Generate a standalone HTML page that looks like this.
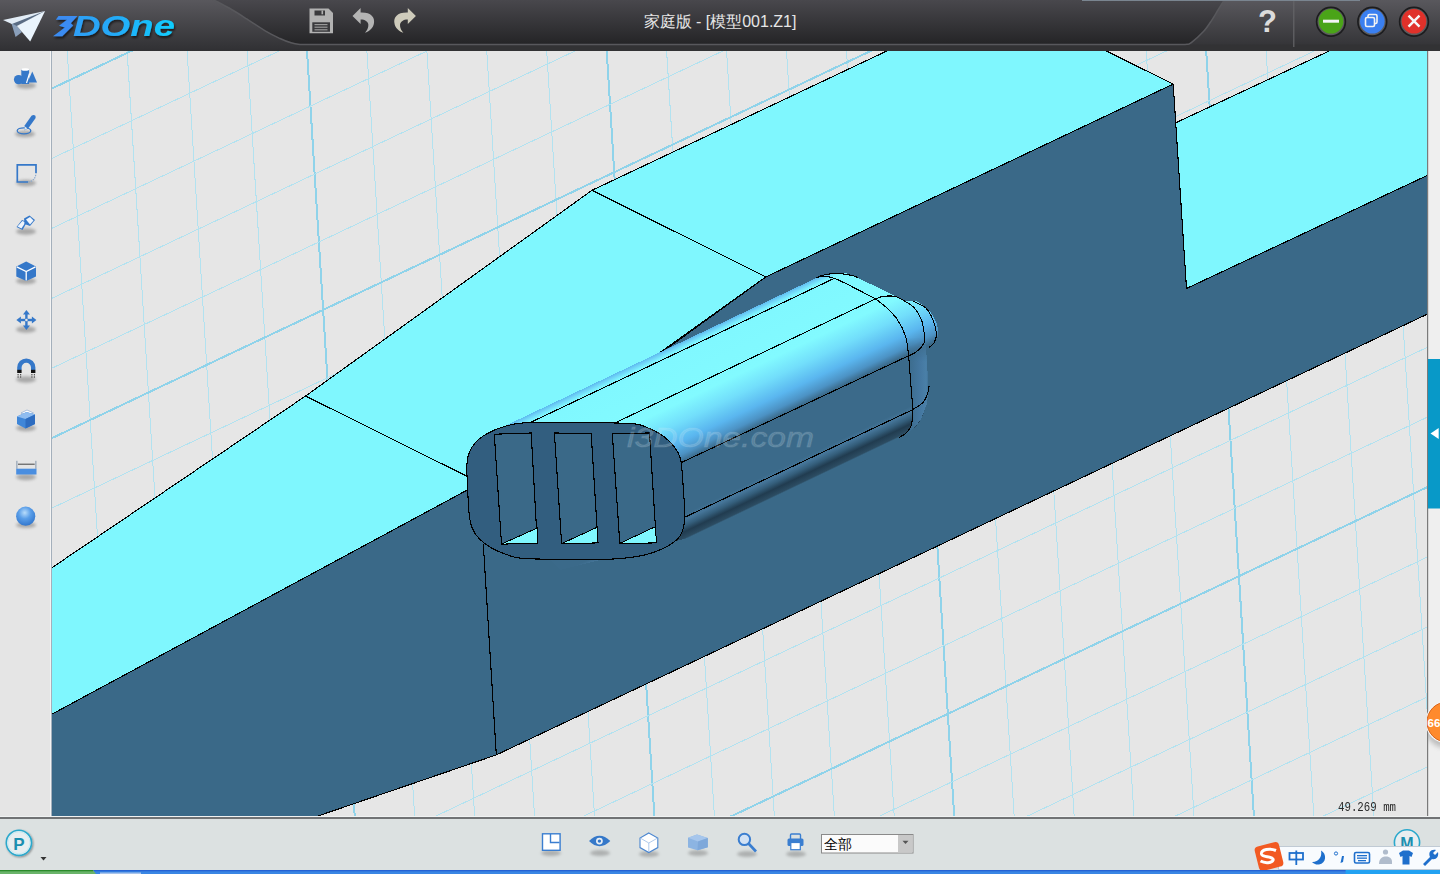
<!DOCTYPE html>
<html><head><meta charset="utf-8">
<style>
html,body{margin:0;padding:0;width:1440px;height:874px;overflow:hidden;background:#e6e6e6;font-family:"Liberation Sans",sans-serif;position:relative;}
svg{display:block;}
</style></head><body>
<svg width="1440" height="874" viewBox="0 0 1440 874" style="position:absolute;left:0;top:0">
<defs><clipPath id="vc"><rect x="51.5" y="51" width="1376" height="765"/></clipPath></defs>
<rect x="51.5" y="51" width="1376" height="765" fill="#e6e6e6"/>
<g clip-path="url(#vc)" shape-rendering="crispEdges">
<g shape-rendering="crispEdges"><line x1="-52.7" y1="51" x2="-5.0" y2="816" stroke="#b2e2f0" stroke-width="1"/>
<line x1="7.2" y1="51" x2="55.0" y2="816" stroke="#8fd3ea" stroke-width="2"/>
<line x1="67.2" y1="51" x2="114.9" y2="816" stroke="#b2e2f0" stroke-width="1"/>
<line x1="127.1" y1="51" x2="174.9" y2="816" stroke="#b2e2f0" stroke-width="1"/>
<line x1="187.1" y1="51" x2="234.8" y2="816" stroke="#b2e2f0" stroke-width="1"/>
<line x1="247.0" y1="51" x2="294.7" y2="816" stroke="#b2e2f0" stroke-width="1"/>
<line x1="307.0" y1="51" x2="354.7" y2="816" stroke="#8fd3ea" stroke-width="2"/>
<line x1="366.9" y1="51" x2="414.6" y2="816" stroke="#b2e2f0" stroke-width="1"/>
<line x1="426.9" y1="51" x2="474.6" y2="816" stroke="#b2e2f0" stroke-width="1"/>
<line x1="486.8" y1="51" x2="534.5" y2="816" stroke="#b2e2f0" stroke-width="1"/>
<line x1="546.7" y1="51" x2="594.5" y2="816" stroke="#b2e2f0" stroke-width="1"/>
<line x1="606.7" y1="51" x2="654.4" y2="816" stroke="#8fd3ea" stroke-width="2"/>
<line x1="666.6" y1="51" x2="714.4" y2="816" stroke="#b2e2f0" stroke-width="1"/>
<line x1="726.6" y1="51" x2="774.3" y2="816" stroke="#b2e2f0" stroke-width="1"/>
<line x1="786.5" y1="51" x2="834.3" y2="816" stroke="#b2e2f0" stroke-width="1"/>
<line x1="846.5" y1="51" x2="894.2" y2="816" stroke="#b2e2f0" stroke-width="1"/>
<line x1="906.4" y1="51" x2="954.2" y2="816" stroke="#8fd3ea" stroke-width="2"/>
<line x1="966.4" y1="51" x2="1014.1" y2="816" stroke="#b2e2f0" stroke-width="1"/>
<line x1="1026.3" y1="51" x2="1074.1" y2="816" stroke="#b2e2f0" stroke-width="1"/>
<line x1="1086.3" y1="51" x2="1134.0" y2="816" stroke="#b2e2f0" stroke-width="1"/>
<line x1="1146.2" y1="51" x2="1194.0" y2="816" stroke="#b2e2f0" stroke-width="1"/>
<line x1="1206.2" y1="51" x2="1253.9" y2="816" stroke="#8fd3ea" stroke-width="2"/>
<line x1="1266.1" y1="51" x2="1313.8" y2="816" stroke="#b2e2f0" stroke-width="1"/>
<line x1="1326.1" y1="51" x2="1373.8" y2="816" stroke="#b2e2f0" stroke-width="1"/>
<line x1="1386.0" y1="51" x2="1433.7" y2="816" stroke="#b2e2f0" stroke-width="1"/>
<line x1="1446.0" y1="51" x2="1493.7" y2="816" stroke="#b2e2f0" stroke-width="1"/>
<line x1="1505.9" y1="51" x2="1553.6" y2="816" stroke="#8fd3ea" stroke-width="2"/>
<line x1="51.5" y1="18.7" x2="1427.5" y2="-631.9" stroke="#b2e2f0" stroke-width="1"/>
<line x1="51.5" y1="88.7" x2="1427.5" y2="-561.9" stroke="#8fd3ea" stroke-width="2"/>
<line x1="51.5" y1="158.6" x2="1427.5" y2="-492.0" stroke="#b2e2f0" stroke-width="1"/>
<line x1="51.5" y1="228.5" x2="1427.5" y2="-422.1" stroke="#b2e2f0" stroke-width="1"/>
<line x1="51.5" y1="298.5" x2="1427.5" y2="-352.1" stroke="#b2e2f0" stroke-width="1"/>
<line x1="51.5" y1="368.4" x2="1427.5" y2="-282.2" stroke="#b2e2f0" stroke-width="1"/>
<line x1="51.5" y1="438.3" x2="1427.5" y2="-212.3" stroke="#8fd3ea" stroke-width="2"/>
<line x1="51.5" y1="508.3" x2="1427.5" y2="-142.3" stroke="#b2e2f0" stroke-width="1"/>
<line x1="51.5" y1="578.2" x2="1427.5" y2="-72.4" stroke="#b2e2f0" stroke-width="1"/>
<line x1="51.5" y1="648.1" x2="1427.5" y2="-2.5" stroke="#b2e2f0" stroke-width="1"/>
<line x1="51.5" y1="718.1" x2="1427.5" y2="67.5" stroke="#b2e2f0" stroke-width="1"/>
<line x1="51.5" y1="788.0" x2="1427.5" y2="137.4" stroke="#8fd3ea" stroke-width="2"/>
<line x1="51.5" y1="857.9" x2="1427.5" y2="207.3" stroke="#b2e2f0" stroke-width="1"/>
<line x1="51.5" y1="927.9" x2="1427.5" y2="277.2" stroke="#b2e2f0" stroke-width="1"/>
<line x1="51.5" y1="997.8" x2="1427.5" y2="347.2" stroke="#b2e2f0" stroke-width="1"/>
<line x1="51.5" y1="1067.7" x2="1427.5" y2="417.1" stroke="#b2e2f0" stroke-width="1"/>
<line x1="51.5" y1="1137.7" x2="1427.5" y2="487.0" stroke="#8fd3ea" stroke-width="2"/>
<line x1="51.5" y1="1207.6" x2="1427.5" y2="557.0" stroke="#b2e2f0" stroke-width="1"/>
<line x1="51.5" y1="1277.5" x2="1427.5" y2="626.9" stroke="#b2e2f0" stroke-width="1"/>
<line x1="51.5" y1="1347.5" x2="1427.5" y2="696.8" stroke="#b2e2f0" stroke-width="1"/>
<line x1="51.5" y1="1417.4" x2="1427.5" y2="766.8" stroke="#b2e2f0" stroke-width="1"/>
<line x1="51.5" y1="1487.3" x2="1427.5" y2="836.7" stroke="#8fd3ea" stroke-width="2"/></g>

<polygon points="51.5,568 305.6,396 592,190.3 886.8,51 1106.3,51 1173.2,84.1 765.9,276.9 467.3,490 51.5,714.4" fill="#7ff7fe"/>
<polygon points="1175.7,122.8 1329.2,51 1428,51 1428,175.1 1186.5,288.5" fill="#7ff7fe"/>
<polygon points="51.5,714.4 467.3,490 765.9,276.9 1173.2,84.1 1186.5,288.5 1428,175.1 1428,313.8 496.3,754.9 318,816 51.5,816" fill="#3a6988"/>
<g stroke="#000" stroke-width="1.1" fill="none">
<polyline points="51.5,568 305.6,396 592,190.3 886.8,51"/>
<polyline points="1106.3,51 1173.2,84.1 1186.5,288.5 1428,175.1"/>
<polyline points="1175.7,122.8 1329.2,51"/>
<polyline points="51.5,714.4 467.3,490 765.9,276.9 1173.2,84.1"/>
<polyline points="318,816 496.3,754.9 1428,313.8"/>
<line x1="305.6" y1="396" x2="467" y2="476.3"/>
<line x1="592" y1="190.3" x2="765.9" y2="276.9"/>
<line x1="483.3" y1="544" x2="496.3" y2="754.9"/>
</g>


<defs>
<linearGradient id="hg" gradientUnits="userSpaceOnUse" x1="505.6" y1="425.6" x2="583" y2="588.1">
<stop offset="0" stop-color="#5cb8ee"/>
<stop offset="0.012" stop-color="#6ccef6"/>
<stop offset="0.035" stop-color="#7ef4fe"/>
<stop offset="0.06" stop-color="#80f8ff"/>
<stop offset="0.3" stop-color="#82faff"/>
<stop offset="0.4" stop-color="#72defb"/>
<stop offset="0.5" stop-color="#5ab6ef"/>
<stop offset="0.565" stop-color="#4c92c4"/>
<stop offset="0.605" stop-color="#3b6a8a"/>
<stop offset="0.87" stop-color="#3b6a8a"/>
<stop offset="0.90" stop-color="#46769a"/>
<stop offset="0.93" stop-color="#345e7b"/>
<stop offset="0.96" stop-color="#213c50"/>
<stop offset="0.992" stop-color="#2c4c62"/>
<stop offset="1" stop-color="#3a6988"/>
</linearGradient>
</defs>
<path d="M505.6,425.6 L822.9,274.9  C825.4,274.6 833.0,272.9 837.8,273.0 C842.6,273.1 842.5,271.6 851.5,275.2 C860.5,278.8 882.9,290.2 891.5,294.3 C900.1,298.4 900.3,298.4 903.0,299.5 C905.7,300.6 905.5,300.8 907.6,301.0 C909.7,301.2 912.6,299.9 915.6,301.0 C918.6,302.1 922.9,304.8 925.9,307.5 C928.9,310.2 931.9,313.7 933.9,317.2 C935.9,320.7 937.3,325.2 937.9,328.6 C938.5,332.0 938.3,334.8 937.3,337.8 C936.2,340.8 933.5,344.4 931.6,346.5 C929.8,348.6 926.9,347.4 926.2,350.5 C925.5,353.6 926.9,360.3 927.2,365.0 C927.5,369.7 927.7,374.2 927.9,378.5 C928.1,382.8 928.5,386.7 928.4,390.8 C928.2,394.9 928.2,398.4 927.0,403.2 C925.8,408.0 923.3,415.3 920.9,419.7 C918.5,424.1 916.0,426.1 912.6,429.3 C909.2,432.5 905.3,436.0 900.3,439.0 C895.3,442.0 885.4,445.8 882.4,447.1 L700,535 L560,570 L470,480 Z" fill="url(#hg)"/>
<defs><linearGradient id="capg" gradientUnits="userSpaceOnUse" x1="906" y1="0" x2="929" y2="0">
<stop offset="0" stop-color="#3a6988"/><stop offset="0.6" stop-color="#4477a0"/><stop offset="0.88" stop-color="#4a80a8"/><stop offset="1" stop-color="#3a6c90"/></linearGradient>
<linearGradient id="capm" gradientUnits="userSpaceOnUse" x1="0" y1="338" x2="0" y2="362">
<stop offset="0" stop-color="#fff" stop-opacity="0"/><stop offset="1" stop-color="#fff" stop-opacity="1"/></linearGradient>
<mask id="capk" maskUnits="userSpaceOnUse" x="880" y="300" width="60" height="150"><rect x="880" y="300" width="60" height="150" fill="url(#capm)"/></mask></defs>
<path d="M905.3,335.5 L908.1,351.5 L910.5,380 L912.6,408.7 L911.3,425.2 L905.8,433.4 L898.9,437.5 L900.3,439 L912.6,429.3 L920.9,419.7 L927,403.2 L928.4,390.8 L927.9,378.5 L927.2,365 L926.2,350.5 L924.5,338 Z" fill="url(#capg)" mask="url(#capk)"/>
<g stroke="#000" stroke-width="1.1" fill="none">
<line x1="529.9" y1="422.7" x2="834.3" y2="278.3"/>
<line x1="615.4" y1="422.7" x2="875.5" y2="298.9"/>
<line x1="682.1" y1="462.2" x2="908.5" y2="355.8"/>
<line x1="685" y1="517.1" x2="912" y2="410"/>
<path d="M668,347.8 L765.9,276.9"/>
<path d="M816.0,277.2 C819.0,277.4 824.4,274.7 834.3,278.3 C844.2,281.9 868.6,295.5 875.5,298.9"/>
<path d="M816.0,277.6 C817.7,277.1 822.3,275.2 826.0,274.5 C829.7,273.8 833.8,273.4 838.0,273.5 C842.2,273.6 848.2,274.7 851.5,275.4 C854.8,276.1 856.9,277.1 858.0,277.5"/>
<path d="M875.5,298.9 C876.8,298.5 880.2,296.8 883.5,296.4 C886.8,296.0 891.8,295.8 895.0,296.4 C898.2,297.0 901.7,299.4 903.0,300.0"/>
<path d="M875.5,298.9 C877.4,300.4 883.4,304.6 887.0,308.0 C890.6,311.4 894.2,314.9 897.3,319.5 C900.3,324.1 903.5,330.2 905.3,335.5 C907.1,340.8 907.2,344.1 908.1,351.5 C909.0,358.9 909.8,370.5 910.5,380.0 C911.2,389.5 912.5,401.2 912.6,408.7 C912.7,416.2 912.4,421.1 911.3,425.2 C910.2,429.3 907.9,431.3 905.8,433.4 C903.7,435.4 900.0,436.8 898.9,437.5"/>
<path d="M903.0,300.0 C904.9,301.3 911.4,304.8 914.4,308.0 C917.4,311.2 919.7,315.3 921.3,319.5 C922.9,323.7 923.7,329.4 924.2,333.2 C924.7,337.0 925.5,339.3 924.2,342.4 C923.0,345.4 919.3,349.3 916.7,351.5 C914.1,353.7 909.9,355.1 908.5,355.8"/>
<path d="M908.0,412.0 C908.7,411.7 909.4,411.7 912.0,410.0 C914.6,408.3 920.9,405.0 923.6,401.8 C926.3,398.6 927.5,393.4 928.4,390.8 C929.3,388.2 928.9,386.8 929.0,386.0"/>
<path d="M913.0,301.2 C915.1,302.3 922.6,304.9 925.9,308.0 C929.2,311.1 931.2,315.7 933.0,320.0 C934.8,324.3 936.3,330.2 936.5,334.0 C936.7,337.8 935.2,340.8 934.0,343.0 C932.8,345.2 929.8,346.8 929.0,347.5"/>
</g>
<path d="M525.2,422.7 C538.1,422.0 562.3,422.5 580.0,422.6 C597.7,422.8 620.0,422.7 631.5,423.6 C643.0,424.5 643.6,426.2 648.7,428.2 C653.9,430.2 658.2,432.6 662.4,435.5 C666.5,438.4 670.6,442.1 673.6,445.9 C676.6,449.7 678.8,452.2 680.4,458.5 C682.0,464.8 682.3,474.3 683.0,483.7 C683.7,493.1 684.7,507.6 684.7,515.0 C684.8,522.4 684.4,524.4 683.3,528.3 C682.2,532.2 681.1,535.3 677.9,538.6 C674.7,541.9 669.5,545.3 664.1,548.0 C658.7,550.7 652.1,553.2 645.2,554.9 C638.3,556.6 629.4,557.6 622.9,558.3 C616.4,559.0 613.1,559.1 606.0,559.3 C598.9,559.5 593.5,559.4 580.0,559.3 C566.5,559.2 537.5,559.4 525.2,558.6 C512.9,557.8 512.1,556.3 506.4,554.5 C500.7,552.7 495.4,550.2 490.9,547.6 C486.4,545.0 482.6,542.1 479.5,539.0 C476.4,535.9 474.2,532.6 472.5,528.8 C470.8,525.0 470.2,522.4 469.4,516.0 C468.6,509.6 468.1,498.8 467.7,490.5 C467.3,482.2 466.7,472.5 466.8,466.5 C466.9,460.5 467.2,458.4 468.5,454.5 C469.8,450.6 471.8,446.7 474.7,443.3 C477.6,439.9 481.1,437.0 485.8,434.3 C490.5,431.6 496.3,428.9 502.9,427.0 C509.5,425.1 512.4,423.4 525.2,422.7 Z" fill="#325e7f" stroke="#000" stroke-width="1.1"/>
<g fill="#3a6988" stroke="#000" stroke-width="1.1">
<polygon points="494.3,434.2 531.2,433 537.3,543.4 501.5,544.1"/>
<polygon points="554.4,433 591.2,433.5 598,542.9 561.6,543.6"/>
<polygon points="612.3,433.5 649.5,433 656.4,542.9 619.8,543.4"/>
</g>
<g fill="#7ff7fe" stroke="#000" stroke-width="1">
<polygon points="501.5,544.1 537.3,528 537.3,543.4"/>
<polygon points="561.6,543.6 597.3,527.2 598,542.9"/>
<polygon points="619.8,543.4 655.5,526.6 656.4,542.9"/>
</g>
<text x="627" y="447" font-family="Liberation Sans" font-style="italic" font-size="28" fill="#d8eef8" fill-opacity="0.2" stroke="#e8f4fa" stroke-opacity="0.1" stroke-width="1.2" textLength="187" lengthAdjust="spacingAndGlyphs">i3DOne.com</text>

</g>
<rect x="51" y="51" width="1" height="765" fill="#a4b0bc"/>
</svg>

<svg width="51" height="765" viewBox="0 51 51 765" style="position:absolute;left:0;top:51px">
<defs>
<filter id="blur" x="-50%" y="-100%" width="200%" height="300%"><feGaussianBlur stdDeviation="1.6"/></filter>
<radialGradient id="sph" cx="0.45" cy="0.32" r="0.7"><stop offset="0" stop-color="#b8dcfb"/><stop offset="0.45" stop-color="#5a9ee8"/><stop offset="1" stop-color="#2f74cc"/></radialGradient>
</defs>
<rect x="0" y="51" width="51" height="765" fill="#e5e5e5"/><rect x="50" y="51" width="1" height="765" fill="#f4f4f4"/>
<ellipse cx="26" cy="85.5" rx="10" ry="3.2" fill="#606060" opacity="0.45" filter="url(#blur)"/><circle cx="18.6" cy="79.6" r="4.7" fill="#3578c9"/><rect x="21.3" y="69.5" width="7.8" height="14.5" fill="#3578c9"/><ellipse cx="25.2" cy="69.5" rx="3.9" ry="1.3" fill="#ffffff"/><polygon points="32.3,71.5 37,82.5 27.5,82.5" fill="#3578c9"/><path d="M29.5,73.5 L26.5,83" stroke="#fff" stroke-width="1.2"/><ellipse cx="25" cy="134" rx="10" ry="3.2" fill="#606060" opacity="0.45" filter="url(#blur)"/><ellipse cx="24" cy="130.8" rx="6.8" ry="3" fill="none" stroke="#3578c9" stroke-width="1.3"/><path d="M24.3,130.5 L24.8,125.2 L31.5,115.8 Q33.5,114.2 35.2,115.6 Q36.2,117 35.3,118.6 L28.5,128 Z" fill="#3578c9"/><path d="M24.3,130.5 L24.8,126.5 L27.3,128.3 Z" fill="#dfe8f0"/><ellipse cx="26" cy="183" rx="10" ry="3.2" fill="#606060" opacity="0.45" filter="url(#blur)"/><path d="M36,173 L36,164.8 L17.3,164.8 L17.3,182 L28,182" fill="none" stroke="#3578c9" stroke-width="1.7"/><path d="M28,182 Q35.5,181 36,173" fill="none" stroke="#8aa8cc" stroke-width="1.2" stroke-dasharray="1.5,1"/><ellipse cx="26" cy="231.5" rx="10" ry="3.2" fill="#606060" opacity="0.45" filter="url(#blur)"/><polygon points="16.5,227 22,220 27,222 22.5,230" fill="#3578c9"/><polygon points="17.5,226.5 22.3,221 25.5,222.3 21.5,228.5" fill="#eef4fc"/><polygon points="24,218.5 29.5,215.5 35,220 30,226 24.5,224" fill="#3578c9"/><polygon points="26,219.5 30,217 33.5,220.5 30,224.5" fill="#eef4fc"/><ellipse cx="26" cy="281" rx="10" ry="3.2" fill="#606060" opacity="0.45" filter="url(#blur)"/><polygon points="26.2,261.6 36,266.5 36,276.5 26.2,281 16.3,276.5 16.3,266.5" fill="#3578c9"/><path d="M16.8,266.8 L26.2,271.5 L35.5,266.8 M26.2,271.5 L26.2,280.5" stroke="#fff" stroke-width="1.3" fill="none"/><ellipse cx="26" cy="329.5" rx="10" ry="3.2" fill="#606060" opacity="0.45" filter="url(#blur)"/><g fill="#3578c9"><polygon points="26.4,310 30,314.5 23,314.5"/><polygon points="26.4,330 30,325.5 23,325.5"/><polygon points="16.4,320 20.9,316.5 20.9,323.5"/><polygon points="36.4,320 31.9,316.5 31.9,323.5"/><rect x="25.2" y="314" width="2.4" height="12"/><rect x="20.5" y="318.8" width="11.8" height="2.4"/></g><circle cx="26.4" cy="320" r="1.3" fill="#e6e6e6"/><ellipse cx="26" cy="379.5" rx="10" ry="3.2" fill="#606060" opacity="0.45" filter="url(#blur)"/><path d="M19.4,370 L19.4,367.5 A6.9,6.9 0 0 1 33.2,367.5 L33.2,370" fill="none" stroke="#3578c9" stroke-width="4.4"/><rect x="17.2" y="369.8" width="4.4" height="3.2" fill="#111"/><rect x="31" y="369.8" width="4.4" height="3.2" fill="#111"/><g fill="#555"><rect x="17.5" y="374" width="1.2" height="1.4"/><rect x="20" y="374" width="1.2" height="1.4"/><rect x="17.5" y="376.3" width="1.2" height="1.4"/><rect x="20" y="376.3" width="1.2" height="1.4"/><rect x="31.3" y="374" width="1.2" height="1.4"/><rect x="33.8" y="374" width="1.2" height="1.4"/><rect x="31.3" y="376.3" width="1.2" height="1.4"/><rect x="33.8" y="376.3" width="1.2" height="1.4"/></g><ellipse cx="26" cy="428" rx="10" ry="3.2" fill="#606060" opacity="0.45" filter="url(#blur)"/><polygon points="21,413 27,410 33.5,413 27.5,416" fill="#ffffff" stroke="#7a9ccc" stroke-width="0.6"/><polygon points="17,416.5 26.5,412 35,414.5 35,424 25.5,428.5 17,424" fill="#3f86d8"/><polygon points="17,416.5 26.5,412 35,414.5 25.5,419" fill="#8fbcf0"/><polygon points="25.5,419 35,414.5 35,424 25.5,428.5" fill="#2d6cc0"/><ellipse cx="26" cy="477" rx="10" ry="3.2" fill="#606060" opacity="0.45" filter="url(#blur)"/><rect x="16.2" y="460.8" width="1.3" height="8" fill="#9aa8b8"/><rect x="35.2" y="460.8" width="1.3" height="8" fill="#9aa8b8"/><line x1="18" y1="464.2" x2="34.7" y2="464.2" stroke="#444" stroke-width="1"/><rect x="16.2" y="468.7" width="20.3" height="5.8" fill="#4a8ee0"/><ellipse cx="26" cy="525" rx="10" ry="3" fill="#606060" opacity="0.45" filter="url(#blur)"/><circle cx="25.7" cy="516.2" r="9.6" fill="url(#sph)"/>
</svg>

<svg width="13" height="765" viewBox="1427 51 13 765" style="position:absolute;left:1427px;top:51px">
<rect x="1427" y="51" width="13" height="765" fill="#efefef"/>
<rect x="1427" y="51" width="1.2" height="765" fill="#7a7a7a"/>
<rect x="1428" y="359" width="12" height="149.5" fill="#0899c8"/>
<polygon points="1430.5,433.4 1438.7,428 1438.7,439" fill="#ffffff"/>
<defs><filter id="osh" x="-50%" y="-50%" width="200%" height="200%"><feGaussianBlur stdDeviation="2.5"/></filter></defs><ellipse cx="1447" cy="730" rx="21" ry="18" fill="#808080" opacity="0.45" filter="url(#osh)"/><circle cx="1447" cy="722" r="21.5" fill="#f4f4f4"/>
<circle cx="1447" cy="722" r="20" fill="#ff8a2c" stroke="#d8641a" stroke-width="1"/>
<text x="1427.5" y="726.5" font-family="Liberation Sans" font-weight="bold" font-size="11.5" fill="#fff">66</text>
</svg>

<svg width="1440" height="58" viewBox="0 816 1440 58" style="position:absolute;left:0;top:816px">
<defs>
<filter id="blur2" x="-50%" y="-100%" width="200%" height="300%"><feGaussianBlur stdDeviation="1.6"/></filter>
<filter id="dsh" x="-30%" y="-30%" width="160%" height="160%"><feGaussianBlur in="SourceAlpha" stdDeviation="1"/><feOffset dx="0.8" dy="1"/><feComponentTransfer><feFuncA type="linear" slope="0.4"/></feComponentTransfer><feMerge><feMergeNode/><feMergeNode in="SourceGraphic"/></feMerge></filter>
</defs>
<rect x="0" y="816" width="1440" height="58" fill="#dce1e1"/>
<rect x="0" y="816" width="1440" height="1.2" fill="#f0f2f2"/>
<rect x="0" y="817.2" width="1440" height="1.6" fill="#56585a"/>
<ellipse cx="551" cy="853" rx="10" ry="3" fill="#606060" opacity="0.38" filter="url(#blur2)"/><rect x="542.5" y="833.8" width="17.6" height="16.5" fill="#fff" stroke="#3a7ed0" stroke-width="1.4"/><path d="M550.5,834 L550.5,842.5 L559.5,842.5" fill="none" stroke="#3a7ed0" stroke-width="1.4"/><ellipse cx="600" cy="853" rx="10" ry="3" fill="#606060" opacity="0.38" filter="url(#blur2)"/><path d="M589,841.1 Q599.5,830.5 610.3,841.1 Q599.5,851.5 589,841.1 Z" fill="#3578c9"/><circle cx="599.4" cy="841.1" r="3.4" fill="#e8eef4"/><circle cx="599.4" cy="841.1" r="1.7" fill="#3578c9"/><ellipse cx="649" cy="854" rx="10" ry="3" fill="#606060" opacity="0.38" filter="url(#blur2)"/><polygon points="648.8,833 657.8,838 657.8,847.6 648.8,852.6 640,847.6 640,838" fill="#fff" stroke="#4a86d0" stroke-width="1.1"/><path d="M640.5,838.2 L648.8,843 L657.3,838.2 M648.8,843 L648.8,852" stroke="#9cbce6" stroke-width="0.8" fill="none"/><ellipse cx="698" cy="853" rx="10" ry="3" fill="#606060" opacity="0.38" filter="url(#blur2)"/><polygon points="697,834.6 707.8,838 707.8,847.2 697.5,850.3 688,847.5 688,837.8" fill="#8cb4e2"/><polygon points="688,837.8 697,834.6 707.8,838 698,841.5" fill="#a6c6ec"/><polygon points="698,841.5 707.8,838 707.8,847.2 697.5,850.3" fill="#7ea8da"/><ellipse cx="747" cy="854" rx="10" ry="3" fill="#606060" opacity="0.38" filter="url(#blur2)"/><circle cx="744.4" cy="839.4" r="5.7" fill="#d2e2f4" stroke="#3a7ed0" stroke-width="2"/><line x1="748.5" y1="843.5" x2="756" y2="851.5" stroke="#3a7ed0" stroke-width="2.6"/><ellipse cx="796" cy="854" rx="10" ry="3" fill="#606060" opacity="0.38" filter="url(#blur2)"/><rect x="790.5" y="834" width="10" height="6" rx="1" fill="none" stroke="#3a7ed0" stroke-width="1.4"/><rect x="787.5" y="838.5" width="16" height="7.5" rx="1.5" fill="#3a7ed0"/><rect x="790.8" y="842.5" width="9.5" height="7.2" fill="#fff" stroke="#3a7ed0" stroke-width="1.2"/><rect x="821.5" y="834.5" width="91.5" height="18.5" fill="#fbfbfb" stroke="#8a8a8a" stroke-width="1"/><rect x="898" y="835" width="14.5" height="17.5" fill="#c8c8c8"/><polygon points="902.5,840.8 908.5,840.8 905.5,844" fill="#555"/><circle cx="18.9" cy="842.8" r="12.6" fill="#e8eef0" stroke="#2aa8cc" stroke-width="1.6" filter="url(#dsh)"/><circle cx="18.9" cy="842.8" r="11" fill="none" stroke="#bfe8f2" stroke-width="0.8"/><text x="19" y="849.5" font-family="Liberation Sans" font-weight="bold" font-size="17" fill="#1b8fb0" text-anchor="middle">P</text><polygon points="40.5,857 46.5,857 43.5,860.5" fill="#333"/><circle cx="1407" cy="842.4" r="12.6" fill="#e8eef0" stroke="#2aa8cc" stroke-width="1.6"/><text x="1407" y="849" font-family="Liberation Sans" font-weight="bold" font-size="16" fill="#1b8fb0" text-anchor="middle">M</text><rect x="1278.5" y="846.5" width="162" height="23" fill="#f8fbfe" stroke="#c0cad4" stroke-width="1"/><g transform="rotate(-14 1269 856.5)"><rect x="1256.5" y="844" width="25" height="25" rx="4" fill="#f25a22"/></g><path d="M1276,850.5 C1270,848 1261,849 1261.5,854 C1262,857.5 1271,856 1273,859 C1274.5,862.5 1266,864 1260.5,861" fill="none" stroke="#fff" stroke-width="3"/><g fill="#1e6fcc"><rect x="1289.5" y="853" width="13.5" height="6.5" fill="none" stroke="#1e6fcc" stroke-width="1.8"/><rect x="1295.4" y="850.5" width="1.8" height="14.5"/><path d="M1321,850.5 C1327,853.5 1326.5,863.5 1319,864.5 C1316,864.8 1313.5,863.8 1312,862 C1318,862.5 1322.5,857 1321,850.5 Z"/><circle cx="1336" cy="853.5" r="1.6" fill="none" stroke="#1e6fcc" stroke-width="1"/><path d="M1342,856 L1344,856 L1343,862 L1340.5,863 Z"/><rect x="1354.5" y="852.5" width="15" height="10.5" rx="1.5" fill="none" stroke="#1e6fcc" stroke-width="1.6"/><rect x="1357" y="855" width="10" height="1.3"/><rect x="1357" y="857.5" width="10" height="1.3"/><rect x="1358" y="860" width="8" height="1.3"/><path d="M1399,853 L1403,850.5 L1409,850.5 L1413,853 L1411.5,857 L1409.5,856 L1409.5,864.5 L1402.5,864.5 L1402.5,856 L1400.5,857 Z"/><path d="M1423,864 L1430,857 C1428,852 1431,849 1436,850 L1433,853 L1435,855 L1438,852 C1439,857 1436,860 1432,859 L1425,866 Z"/></g><circle cx="1385.5" cy="852" r="2.6" fill="#b0bccc"/><path d="M1379,864 C1379,858 1383,856.5 1386,856.5 C1389,856.5 1392,858 1392,862 L1392,864 Z" fill="#b0bccc"/>
<rect x="0" y="870" width="1440" height="4" fill="#3a86e4"/>
<rect x="0" y="870" width="1440" height="1.3" fill="#2462d4"/>
<path d="M0,870 L93,870 L96,874 L0,874 Z" fill="#6ab46a"/>
<rect x="0" y="870" width="93" height="1.3" fill="#2a8a2a"/>
<rect x="1345.6" y="870" width="95" height="4" fill="#22a2f2"/>
<rect x="100" y="872.5" width="41" height="1.5" fill="#a8c4ec"/>
</svg>
<div style="position:absolute;left:823.5px;top:835px;font-size:14px;line-height:18px;color:#000;font-family:'Liberation Sans',sans-serif;">全部</div>
<div style="position:absolute;left:1338.4px;top:800.6px;font-size:12.5px;line-height:14px;color:#2a2a2a;font-family:'Liberation Mono',monospace;transform:scaleX(0.86);transform-origin:0 0;white-space:nowrap;">49.269 mm</div>


<svg id="title" width="1440" height="51" viewBox="0 0 1440 51" style="position:absolute;left:0;top:0">
<defs>
<linearGradient id="tg" x1="0" y1="0" x2="0" y2="1"><stop offset="0" stop-color="#49484d"/><stop offset="1" stop-color="#242426"/></linearGradient>
<linearGradient id="tg2" x1="0" y1="0" x2="0" y2="1"><stop offset="0" stop-color="#59585d"/><stop offset="1" stop-color="#303033"/></linearGradient>
<linearGradient id="lg2" x1="0" y1="0" x2="1" y2="0"><stop offset="0" stop-color="#2f9ef6"/><stop offset="0.4" stop-color="#24aaf8"/><stop offset="1" stop-color="#10cefe"/></linearGradient>
<filter id="tsh" x="-10%" y="-10%" width="130%" height="140%"><feGaussianBlur in="SourceAlpha" stdDeviation="1.2"/><feOffset dx="1" dy="2"/><feComponentTransfer><feFuncA type="linear" slope="0.6"/></feComponentTransfer><feMerge><feMergeNode/><feMergeNode in="SourceGraphic"/></feMerge></filter>
</defs>
<rect width="1440" height="51" fill="url(#tg2)"/>
<path d="M213.0,-0.5 C215.8,1.0 224.4,5.3 230.0,8.5 C235.6,11.7 240.8,15.1 246.7,18.9 C252.6,22.7 260.1,27.8 265.6,31.1 C271.2,34.4 275.8,36.5 280.0,38.5 C284.2,40.5 287.8,41.8 291.1,42.8 C294.4,43.8 296.9,44.1 300.0,44.4 C303.1,44.7 308.3,44.5 310.0,44.5 L1180,44.5 C1181.2,44.5 1185.1,44.6 1187.0,44.3 C1188.9,44.0 1188.5,44.9 1191.3,42.7 C1194.1,40.5 1200.2,35.1 1203.7,31.3 C1207.2,27.5 1209.6,23.4 1212.0,19.8 C1214.4,16.2 1215.9,13.4 1218.0,10.0 C1220.1,6.6 1223.5,1.2 1224.6,-0.5 Z" fill="url(#tg)"/>
<rect x="300" y="44.5" width="1140" height="6.5" fill="#323234"/>
<path d="M213.0,-0.5 C215.8,1.0 224.4,5.3 230.0,8.5 C235.6,11.7 240.8,15.1 246.7,18.9 C252.6,22.7 260.1,27.8 265.6,31.1 C271.2,34.4 275.8,36.5 280.0,38.5 C284.2,40.5 287.8,41.8 291.1,42.8 C294.4,43.8 296.9,44.1 300.0,44.4 C303.1,44.7 308.3,44.5 310.0,44.5 L1180,44.5 C1181.2,44.5 1185.1,44.6 1187.0,44.3 C1188.9,44.0 1188.5,44.9 1191.3,42.7 C1194.1,40.5 1200.2,35.1 1203.7,31.3 C1207.2,27.5 1209.6,23.4 1212.0,19.8 C1214.4,16.2 1215.9,13.4 1218.0,10.0 C1220.1,6.6 1223.5,1.2 1224.6,-0.5" fill="none" stroke="#58585c" stroke-width="1.5"/>
<line x1="1082" y1="0.5" x2="1360" y2="0.5" stroke="#7a8590" stroke-width="1"/>
<!-- paper plane -->
<polygon points="11.4,23.3 45.1,11 16.9,26.1 22,32 15.6,37" fill="#8a9fba"/>
<polygon points="11.4,23.3 45.1,11 16.9,26.1" fill="#5a6c84"/>
<polygon points="3,20.1 45.1,11 11.8,24" fill="#e2ecf6"/>
<polygon points="45.1,11 16.9,26.1 30.2,41.6" fill="#eaf4fd"/>
<g filter="url(#tsh)"><polygon points="58.5,16 77.5,16 70.8,23.2 73.2,25.6 62.3,36.2 53,36.2 64.8,27.6 59,25.8 67,19.8 55.8,19.8" fill="#3a8cf2"/>
<text x="73" y="36.3" font-family="Liberation Sans" font-weight="bold" font-style="italic" font-size="29" fill="url(#lg2)" textLength="102" lengthAdjust="spacingAndGlyphs">DOne</text></g>
<!-- save -->
<path d="M309.5,8.5 L328.5,8.5 L333,13 L333,33.3 L309.5,33.3 Z" fill="#b2b2b2"/>
<rect x="314.5" y="10.5" width="10.5" height="5" fill="#3a3a3d"/>
<rect x="321.5" y="10.5" width="1.6" height="3.8" fill="#b2b2b2"/>
<rect x="312.3" y="22.3" width="17.7" height="9.5" fill="#3a3a3d"/>
<rect x="314.5" y="24" width="13" height="1.2" fill="#9a9a9a"/>
<rect x="314.5" y="26.6" width="13" height="1.2" fill="#9a9a9a"/>
<rect x="314.5" y="29.2" width="13" height="1.2" fill="#9a9a9a"/>
<!-- undo -->
<path d="M352.5,15.9 L360.6,8.1 L360.6,12.4 C371,12 375,17 374,23 C373.5,28 369,31.5 365,32.8 C368.5,29 370,23 366,21 C364.5,20 362.5,19.5 360.6,19.6 L360.6,24.1 Z" fill="#b4b4b4"/>
<!-- redo -->
<path d="M415.9,15.9 L407.8,8.1 L407.8,12.4 C397.4,12 393.4,17 394.4,23 C394.9,28 399.4,31.5 403.4,32.8 C399.9,29 398.4,23 402.4,21 C403.9,20 405.9,19.5 407.8,19.6 L407.8,24.1 Z" fill="#cecbbb"/>
<!-- help -->
<text x="1267.5" y="32.3" font-family="Liberation Sans" font-weight="bold" font-size="31" fill="#dcdcdc" text-anchor="middle">?</text>
<line x1="1293.8" y1="1" x2="1293.8" y2="47" stroke="#646468" stroke-width="1.2"/>
<!-- window buttons -->
<g>
<circle cx="1331" cy="21.7" r="15.2" fill="#1c1c1e"/>
<circle cx="1331" cy="21.7" r="13.5" fill="#5c5c5e"/>
<circle cx="1331" cy="21.2" r="12.3" fill="#4aa418"/>
<rect x="1323" y="19.7" width="16" height="3" fill="#f4f4f4"/>
<circle cx="1372.3" cy="21.7" r="15.2" fill="#1c1c1e"/>
<circle cx="1372.3" cy="21.7" r="13.5" fill="#5c5c5e"/>
<circle cx="1372.3" cy="21.2" r="12.3" fill="#3a7ff0"/>
<rect x="1368" y="14.5" width="9" height="9" rx="1.5" fill="none" stroke="#f4f4f4" stroke-width="1.6"/>
<rect x="1365.5" y="17.5" width="9" height="9" rx="1.5" fill="#3a7ff0" stroke="#f4f4f4" stroke-width="1.6"/>
<circle cx="1414" cy="21.7" r="15.2" fill="#1c1c1e"/>
<circle cx="1414" cy="21.7" r="13.5" fill="#5c5c5e"/>
<circle cx="1414" cy="21.2" r="12.3" fill="#e0312a"/>
<path d="M1408.5,15.7 L1419.5,26.7 M1419.5,15.7 L1408.5,26.7" stroke="#f6f6f6" stroke-width="2.4"/>
</g>
</svg>
<div style="position:absolute;left:0;top:11px;width:1440px;text-align:center;color:#e6e6e6;font-size:16px;line-height:22px;font-family:'Liberation Sans',sans-serif;">家庭版 - [模型001.Z1]</div>

</body></html>
